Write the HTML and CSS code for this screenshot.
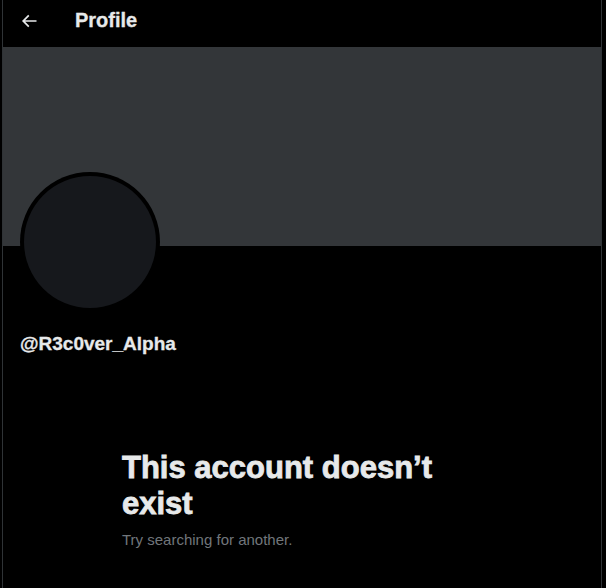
FILE: index.html
```html
<!DOCTYPE html>
<html lang="en">
<head>
<meta charset="utf-8">
<title>Profile</title>
<link rel="stylesheet" href="styles.css">
</head>
<body>
<main class="column">
  <header class="topbar">
    <span class="back">
      <svg viewBox="0 0 24 24" width="20" height="20" aria-hidden="true"><path fill="#e7e9ea" d="M7.414 13l5.043 5.04-1.414 1.42L3.586 12l7.457-7.46 1.414 1.42L7.414 11H21v2H7.414z"/></svg>
    </span>
    <h2 class="title">Profile</h2>
  </header>
  <div class="banner"></div>
  <section class="profile">
    <div class="avatar"><div class="avatar-inner"></div></div>
    <div class="handle">@R3c0ver_Alpha</div>
  </section>
  <section class="empty">
    <h1 class="empty-title">This account doesn’t exist</h1>
    <p class="empty-sub">Try searching for another.</p>
  </section>
</main>
</body>
</html>
```
FILE: styles.css
```css
html, body {
  margin: 0;
  padding: 0;
  background: #000;
}
body {
  font-family: "Liberation Sans", Arial, sans-serif;
  color: #e7e9ea;
  height: 588px;
  overflow: hidden;
}
.column {
  margin-left: 2px;
  width: 598px;
  min-height: 588px;
  border-left: 1px solid #2f3336;
  border-right: 1px solid #2f3336;
}
.topbar {
  height: 47px;
  box-sizing: border-box;
  padding: 8px 16px 0 16px;
  display: flex;
  align-items: flex-start;
}
.back {
  height: 24px;
  display: flex;
  align-items: center;
  margin-top: 1px;
}
.back svg { display: block; }
.title {
  margin: 0 0 0 36px;
  font-size: 20px;
  line-height: 24px;
  font-weight: 700;
  -webkit-text-stroke: 0.3px #e7e9ea;
}
.banner {
  height: 199px;
  background: #333639;
}
.profile {
  padding: 0 17px;
}
.avatar {
  width: 140px;
  height: 140px;
  box-sizing: border-box;
  margin-top: -74px;
  border-radius: 50%;
  background: #000;
  padding: 4px;
}
.avatar-inner {
  width: 100%;
  height: 100%;
  border-radius: 50%;
  background: #16181c;
}
.handle {
  margin-top: 20px;
  font-size: 19px;
  line-height: 24px;
  font-weight: 700;
  -webkit-text-stroke: 0.3px #e7e9ea;
}
.empty {
  width: 400px;
  box-sizing: border-box;
  margin: 94px auto 0;
  padding: 0 20px;
}
.empty-title {
  margin: 0;
  font-size: 31px;
  line-height: 36px;
  font-weight: 700;
  -webkit-text-stroke: 0.8px #e7e9ea;
}
.empty-sub {
  margin: 8px 0 0;
  font-size: 15px;
  line-height: 20px;
  color: #71767b;
}
```
